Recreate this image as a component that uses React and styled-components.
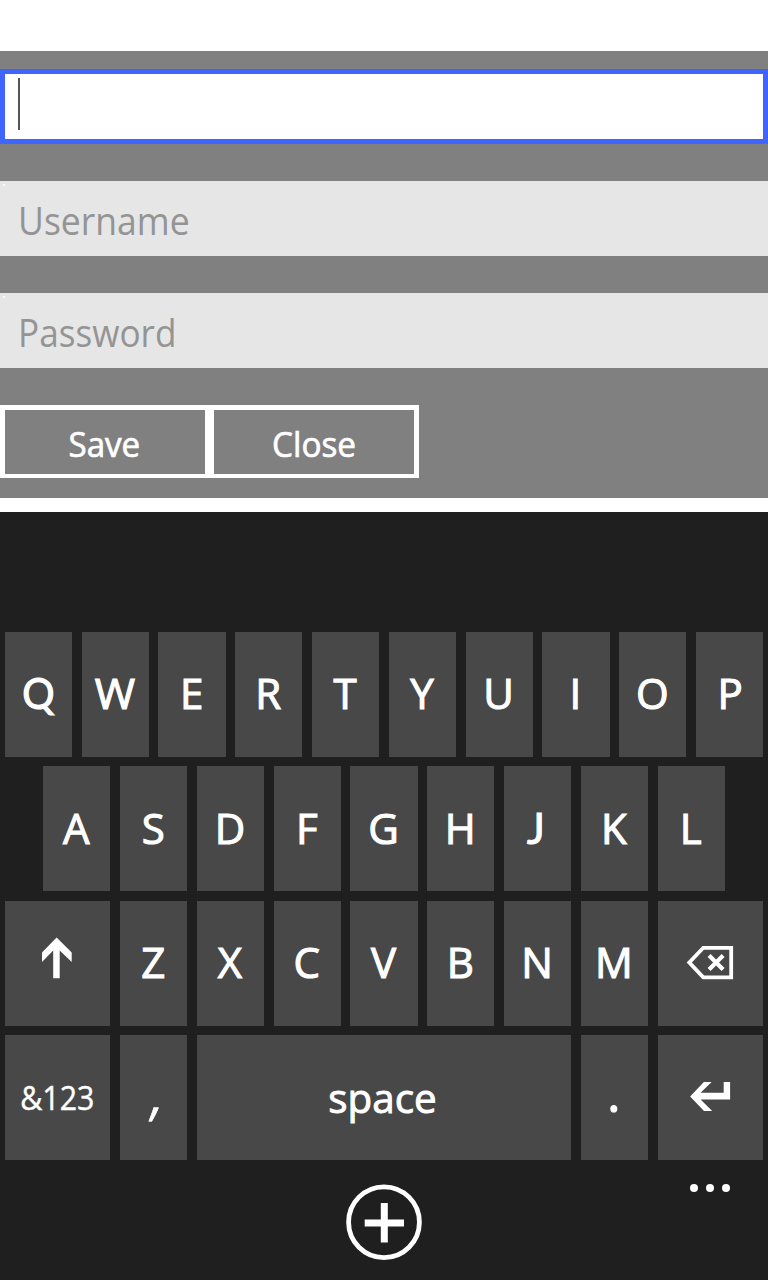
import React from "react";
import styled, { createGlobalStyle } from "styled-components";

const GlobalStyle = createGlobalStyle`
  *, *::before, *::after { box-sizing: border-box; }
  body { margin: 0; background: #fff; font-family: "Open Sans", "Noto Sans", sans-serif; }
`;

const Screen = styled.main`
  width: 768px;
  height: 1280px;
  overflow: hidden;
  display: flex;
  flex-direction: column;
  background: #fff;
`;

const Form = styled.form`
  height: 447px;
  margin-top: 51px;
  padding-top: 18px;
  display: flex;
  flex-direction: column;
  gap: 37px;
  background: #808080;
`;

const Field = styled.div`
  position: relative;
  flex: none;
  height: 75px;
  display: flex;
  align-items: center;
  padding-left: ${(p) => (p.$active ? 13 : 18)}px;
  background: ${(p) => (p.$active ? "#fff" : "#e6e6e6")};
  border: ${(p) => (p.$active ? "5px solid #3e65ff" : "none")};
  color: #949494;
  font-size: 38px;
  line-height: 75px;

  &::before {
    content: "";
    display: ${(p) => (p.$active ? "none" : "block")};
    position: absolute;
    left: 3px;
    top: 3px;
    width: 2px;
    height: 2px;
    background: #f8f8f8;
  }
`;

const Caret = styled.span`
  width: 2px;
  height: 52px;
  margin-bottom: 5px;
  background: #555;
`;

const Label = styled.span`
  display: inline-block;
  white-space: pre;
  font-family: ${(p) => p.$family || "inherit"};
  -webkit-text-stroke: ${(p) => p.$stroke || 0}px currentColor;
  transform-origin: ${(p) => p.$origin || "center"};
  transform: translate(${(p) => p.$x || 0}px, ${(p) => p.$y || 0}px)
    scaleX(${(p) => p.$stretch || 1}) skewX(${(p) => p.$skew || 0}deg);
`;

const Actions = styled.div`
  display: flex;
`;

const ActionButton = styled.button`
  width: ${(p) => p.$width}px;
  height: 73px;
  padding: 0;
  border: 5px solid #fff;
  border-bottom-width: 4px;
  border-left-width: ${(p) => p.$left}px;
  background: transparent;
  color: #fff;
  font: 400 34.5px/60px "Open Sans", sans-serif;
`;

const Keyboard = styled.section`
  height: 648px;
  margin-top: 14px;
  padding: 120px 4.8px 0;
  display: flex;
  flex-direction: column;
  gap: 9.6px;
  background: #1f1f1f;
`;

const KeyRow = styled.div`
  display: flex;
  justify-content: center;
  gap: 9.6px;
`;

const Key = styled.button`
  flex: none;
  width: ${(p) => p.$width || 67.2}px;
  height: 124.8px;
  padding: 0;
  border: 0;
  display: flex;
  align-items: center;
  justify-content: center;
  background: #484848;
  color: #fff;
  font: 400 ${(p) => p.$size || 42}px/1 "Open Sans", sans-serif;
`;

const KeyIcon = styled.svg`
  display: block;
  width: 105.6px;
  height: 124.8px;
`;

const AppBar = styled.nav`
  height: 120px;
  display: grid;
  grid-template-columns: 1fr 76px 1fr;
  padding-top: 24px;
  background: #1f1f1f;
`;

const AddButton = styled.button`
  grid-column: 2;
  width: 76px;
  height: 76px;
  padding: 0;
  border: 0;
  background: transparent;
`;

const MoreDots = styled.div`
  display: flex;
  justify-content: flex-end;
  gap: 8px;
  padding-right: 38px;
`;

const Dot = styled.i`
  width: 8px;
  height: 8px;
  border-radius: 50%;
  background: #fff;
`;

const ShiftIcon = () => (
  <KeyIcon viewBox="0 0 105.6 124.8" fill="#fff">
    <path d="M51.6 36.4 66.7 51.4V61L54.7 49.5V77.2H48.2V49.5L37 61V51.4Z" />
  </KeyIcon>
);

const BackspaceIcon = () => (
  <KeyIcon viewBox="0 0 105.6 124.8" fill="none" stroke="#fff">
    <path strokeWidth="3.8" d="M45.3 46.8H73.2V76.3H45.3L31.3 61.55Z" />
    <path strokeWidth="4.2" d="M51.1 54.4 65.1 68.4M65.1 54.4 51.1 68.4" />
  </KeyIcon>
);

const EnterIcon = () => (
  <KeyIcon viewBox="0 0 105.6 124.8" fill="#fff">
    <path d="M32.1 61.4 45.9 47.1H53.6L42.6 57.8H65.7V47.1H72.1V64.5H42.6L54.2 75.9H46Z" />
  </KeyIcon>
);

const SHIFT_X = { P: 0.5, J: -1.8, Q: -0.3 };
const STRETCH = { W: 1.04, Q: 0.96 };

const Letters = ({ chars }) =>
  chars.split("").map((c) => (
    <Key key={c} type="button">
      <Label
        $x={SHIFT_X[c] ?? -0.5}
        $y={-0.6}
        $stroke={1.1}
        $stretch={STRETCH[c]}
        $family={c === "J" || c === "Q" ? "Lato" : undefined}
      >
        {c}
      </Label>
    </Key>
  ));

export default function App() {
  return (
    <>
      <GlobalStyle />
      <Screen>
        <Form>
          <Field $active>
            <Caret />
          </Field>
          <Field>
            <Label $origin="left" $stretch={0.935} $y={1.5}>Username</Label>
          </Field>
          <Field>
            <Label $origin="left" $stretch={0.925} $y={1.5}>Password</Label>
          </Field>
          <Actions>
            <ActionButton type="button" $width={210} $left={5}>
              <Label $stroke={0.7} $stretch={0.96} $x={-1} $y={1.5}>Save</Label>
            </ActionButton>
            <ActionButton type="button" $width={209} $left={4}>
              <Label $stroke={0.7} $stretch={0.965} $x={0.5} $y={1.5}>Close</Label>
            </ActionButton>
          </Actions>
        </Form>
        <Keyboard>
          <KeyRow><Letters chars="QWERTYUIOP" /></KeyRow>
          <KeyRow><Letters chars="ASDFGHJKL" /></KeyRow>
          <KeyRow>
            <Key type="button" $width={105.6} aria-label="Shift"><ShiftIcon /></Key>
            <Letters chars="ZXCVBNM" />
            <Key type="button" $width={105.6} aria-label="Backspace"><BackspaceIcon /></Key>
          </KeyRow>
          <KeyRow>
            <Key type="button" $width={105.6} $size={33}>
              <Label $stretch={0.92} $stroke={0.4} $y={-0.5}>&amp;123</Label>
            </Key>
            <Key type="button" $size={56}>
              <Label $skew={-11} $x={5} $y={-6} $stretch={0.9} $stroke={0.5}>,</Label>
            </Key>
            <Key type="button" $width={374.4} $size={40}>
              <Label $stroke={0.9} $x={-1.2} $stretch={1.01}>space</Label>
            </Key>
            <Key type="button" $size={50}>
              <Label $stroke={1.2} $x={-0.5} $y={-5}>.</Label>
            </Key>
            <Key type="button" $width={105.6} aria-label="Enter"><EnterIcon /></Key>
          </KeyRow>
        </Keyboard>
        <AppBar>
          <AddButton type="button" aria-label="Add">
            <svg width="76" height="76" viewBox="0 0 76 76" fill="none" stroke="#fff">
              <circle cx="38" cy="38.2" r="35.4" strokeWidth="4.8" />
              <path strokeWidth="7" d="M18.7 38.9H58M38.3 19V58.4" />
            </svg>
          </AddButton>
          <MoreDots><Dot /><Dot /><Dot /></MoreDots>
        </AppBar>
      </Screen>
    </>
  );
}
